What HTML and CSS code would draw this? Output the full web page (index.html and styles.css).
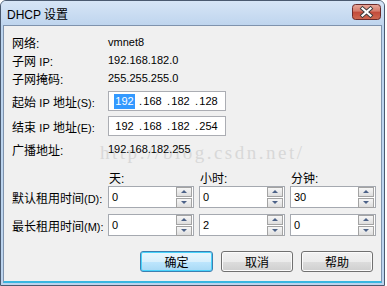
FILE: index.html
```
<!DOCTYPE html>
<html lang="zh">
<head>
  <meta charset="UTF-8" />
  <title>DHCP 设置</title>
  <link rel="stylesheet" href="styles.css">
</head>
<body>

  <div class="window">
    <!-- TITLE BAR -->
    <div class="titlebar">
      <span class="title">DHCP 设置</span>
      <div class="close">
        <svg width="29" height="16" viewBox="0 0 29 16">
          <defs>
            <linearGradient id="cg" x1="0" y1="0" x2="0" y2="1">
              <stop offset="0" stop-color="#e9a99b"/>
              <stop offset="0.45" stop-color="#d47a6a"/>
              <stop offset="0.5" stop-color="#c24a3a"/>
              <stop offset="1" stop-color="#cf6a52"/>
            </linearGradient>
          </defs>
          <rect x="0.5" y="0.5" width="28" height="15" rx="3" fill="url(#cg)" stroke="#6b2a2a"/>
          <path d="M10.5 4.5 L18.5 11.5 M18.5 4.5 L10.5 11.5" stroke="#3b3b3b" stroke-width="4" stroke-linecap="square"/>
          <path d="M10.5 4.5 L18.5 11.5 M18.5 4.5 L10.5 11.5" stroke="#ffffff" stroke-width="2.2" stroke-linecap="square"/>
        </svg>
      </div>
    </div>

    <!-- CLIENT AREA -->
    <div class="client">
      <div class="watermark">http://blog.csdn.net/</div>

      <div class="row r1"><span class="label">网络:</span><span class="value">vmnet8</span></div>
      <div class="row"><span class="label">子网 <span class="lat">IP</span>:</span><span class="value">192.168.182.0</span></div>
      <div class="row"><span class="label">子网掩码:</span><span class="value">255.255.255.0</span></div>

      <div class="row field-row r4">
        <span class="label">起始 <span class="lat">IP</span> 地址<span class="lat">(S):</span></span>
        <div class="ipbox">
          <span class="oct"><span class="sel">192</span></span><span class="dot">.</span>
          <span class="oct">168</span><span class="dot">.</span>
          <span class="oct">182</span><span class="dot">.</span>
          <span class="oct">128</span>
        </div>
      </div>
      <div class="row field-row r5">
        <span class="label">结束 <span class="lat">IP</span> 地址<span class="lat">(E):</span></span>
        <div class="ipbox">
          <span class="oct">192</span><span class="dot">.</span>
          <span class="oct">168</span><span class="dot">.</span>
          <span class="oct">182</span><span class="dot">.</span>
          <span class="oct">254</span>
        </div>
      </div>

      <div class="row r6"><span class="label">广播地址:</span><span class="value">192.168.182.255</span></div>

      <div class="row heads">
        <span class="label"></span>
        <span class="head">天:</span>
        <span class="head">小时:</span>
        <span class="head">分钟:</span>
      </div>

      <div class="row spin-row">
        <span class="label">默认租用时间<span class="lat">(D):</span></span>
        <div class="spin"><span class="val">0</span><div class="arrows"><span class="up"></span><span class="down"></span></div></div>
        <div class="spin"><span class="val">0</span><div class="arrows"><span class="up"></span><span class="down"></span></div></div>
        <div class="spin"><span class="val">30</span><div class="arrows"><span class="up"></span><span class="down"></span></div></div>
      </div>
      <div class="row spin-row r2">
        <span class="label">最长租用时间<span class="lat">(M):</span></span>
        <div class="spin"><span class="val">0</span><div class="arrows"><span class="up"></span><span class="down"></span></div></div>
        <div class="spin"><span class="val">2</span><div class="arrows"><span class="up"></span><span class="down"></span></div></div>
        <div class="spin"><span class="val">0</span><div class="arrows"><span class="up"></span><span class="down"></span></div></div>
      </div>

      <div class="buttons">
        <button class="default">确定</button>
        <button>取消</button>
        <button>帮助</button>
      </div>
    </div>
  </div>

</body>
</html>
```

FILE: styles.css
```
body {
  margin: 0;
  background: #ffffff;
  font-family: "Liberation Sans", "Noto Sans CJK SC", sans-serif;
  font-size: 12px;
  color: #000;
}

/* Window frame */
.window {
  width: 383px;
  height: 284px;
  border: 1px solid #4a5a70;
  border-radius: 6px 6px 0 0;
  background: #bcd4ee;
  display: flex;
  flex-direction: column;
  overflow: hidden;
}

.titlebar {
  height: 24px;
  flex: none;
  display: flex;
  align-items: center;
  justify-content: space-between;
  padding: 0 3px 0 6px;
  background: linear-gradient(#d6e5f6, #bfd5ee);
}

.title {
  font-size: 12px;
  color: #000;
  margin-top: 1px;
}

.close {
  width: 29px;
  height: 16px;
  margin-top: -2px;
}

.close svg {
  display: block;
}

.client {
  position: relative;
  flex: 1;
  margin: 0 2px 2px 2px;
  border: 1px solid #7f93ad;
  border-bottom: 2px solid #38b6e0;
  background: #f0f0f0;
  padding: 7px 0 0 8px;
}

/* Watermark over the form */
.watermark {
  position: absolute;
  left: 96px;
  top: 116px;
  font-family: "Liberation Serif", serif;
  font-size: 19px;
  letter-spacing: 2.5px;
  color: #d8d8d8;
  pointer-events: none;
}

.row {
  display: flex;
  align-items: center;
  height: 18px;
  position: relative;
}

.label {
  width: 96px;
  flex: none;
  white-space: nowrap;
}

.lat,
.value,
.ipbox,
.val {
  font-size: 11px;
}

.field-row {
  height: 20px;
}

.r4 { margin-top: 4px; }
.r5 { margin-top: 5px; }
.r6 { margin-top: 4px; }

.ipbox {
  width: 111px;
  height: 18px;
  border: 1px solid #abadb3;
  background: #fff;
  display: flex;
  align-items: center;
  padding-left: 5px;
}

.oct {
  width: 21px;
  text-align: center;
}

.dot {
  width: 7px;
  text-align: right;
}

.sel {
  background: #3399ff;
  color: #fff;
  padding: 1px 1px 2px;
}

.heads {
  margin-top: 10px;
}

.head {
  width: 91px;
  padding-left: 1px;
}

.spin-row {
  height: 22px;
}

.spin-row.r2 {
  margin-top: 6px;
}

.spin {
  width: 84px;
  height: 20px;
  border: 1px solid #a5a9b0;
  background: #fff;
  margin-right: 5px;
  display: flex;
  align-items: center;
  justify-content: space-between;
}

.val {
  padding-left: 3px;
}

.arrows {
  display: flex;
  flex-direction: column;
  gap: 1px;
  margin-right: 1px;
}

.arrows span {
  width: 14px;
  height: 8px;
  border: 1px solid #a3a3a3;
  background: linear-gradient(#f6f6f6, #dedede);
  position: relative;
}

.arrows span::after {
  content: "";
  position: absolute;
  left: 4px;
  top: 2px;
  border-left: 3px solid transparent;
  border-right: 3px solid transparent;
}

.up::after {
  border-bottom: 3px solid #4c6288;
}

.down::after {
  border-top: 3px solid #4c6288;
}

.buttons {
  display: flex;
  justify-content: flex-end;
  gap: 8px;
  margin-top: 15px;
  padding-right: 8px;
}

button {
  width: 72px;
  height: 21px;
  font-family: "Liberation Sans", "Noto Sans CJK SC", sans-serif;
  font-size: 12px;
  color: #000;
  border: 1px solid #707070;
  border-radius: 3px;
  background: linear-gradient(#f2f2f2 0%, #ebebeb 50%, #dddddd 51%, #cfcfcf 100%);
  box-shadow: inset 0 0 0 1px #fbfbfb;
  padding: 0;
}

button.default {
  width: 73px;
  border-color: #3c7fb1;
  box-shadow: inset 0 0 0 1px #48d3fb;
  background: linear-gradient(#eaf6fd 0%, #d9f0fc 50%, #bee6fd 51%, #a7d9f5 100%);
}
```
